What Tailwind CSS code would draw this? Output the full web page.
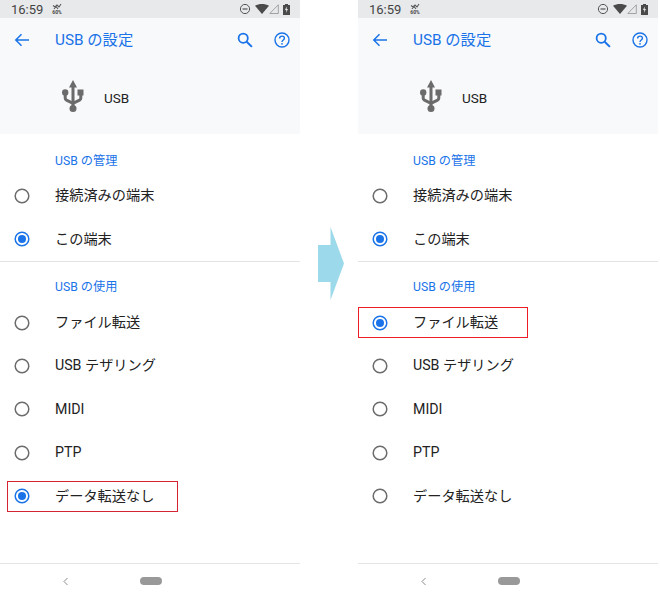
<!DOCTYPE html>
<html lang="ja">
<head>
    <meta charset="UTF-8">
    <title>USB の設定</title>
    <script src="https://cdn.jsdelivr.net/npm/@tailwindcss/browser@4"></script>
</head>
<body class="bg-white font-['Roboto','Noto_Sans_CJK_JP',sans-serif] overflow-hidden">
    <svg class="hidden">
        <symbol id="radio-off" viewBox="0 0 16 16"><circle cx="8" cy="8" r="6.8" fill="none" stroke="#6b6b6b" stroke-width="1.5"/></symbol>
        <symbol id="radio-on" viewBox="0 0 16 16"><circle cx="8" cy="8" r="6.8" fill="none" stroke="#1a73e8" stroke-width="1.5"/><circle cx="8" cy="8" r="4" fill="#1a73e8"/></symbol>
        <symbol id="back" viewBox="0 0 16 16"><path d="M15 8H2M7.5 2.200 1.800 8l5.700 5.800" fill="none" stroke="#1a73e8" stroke-width="1.500"/></symbol>
        <symbol id="search" viewBox="0 0 16 16"><circle cx="6.200" cy="6.200" r="4.600" fill="none" stroke="#1a73e8" stroke-width="1.800"/><path d="m9.700 9.700 5.200 5.200" stroke="#1a73e8" stroke-width="2"/></symbol>
        <symbol id="help" viewBox="0 0 16 16"><circle cx="8" cy="8" r="7" fill="none" stroke="#1a73e8" stroke-width="1.400"/><path d="M5.600 6.400C5.600 5 6.600 4.100 8 4.100s2.400.900 2.400 2.100c0 1.700-2.400 1.800-2.400 3.800" fill="none" stroke="#1a73e8" stroke-width="1.400"/><circle cx="8" cy="11.800" r=".9" fill="#1a73e8"/></symbol>
        <symbol id="usb" viewBox="0 0 22 33"><path d="M11 0l4 7.500h-2.500V27h-3V7.500H7z" fill="#6b6b6b"/><circle cx="11" cy="28.500" r="3.500" fill="#6b6b6b"/><circle cx="3.200" cy="12.500" r="3.200" fill="#6b6b6b"/><rect x="15.500" y="9.500" width="6" height="6" fill="#6b6b6b"/><path d="M3.200 14v4.200c0 1 .6 1.500 1.300 1.900l6.500 3.200 6.500-3.200c.7-.4 1.300-.9 1.300-1.900V14" fill="none" stroke="#6b6b6b" stroke-width="3"/></symbol>
        <symbol id="dnd" viewBox="0 0 12 12"><circle cx="6" cy="6" r="4.600" fill="none" stroke="#555" stroke-width="1"/><path d="M3.500 6h5" stroke="#555" stroke-width="1.200"/></symbol>
        <symbol id="wifi" viewBox="0 0 14 10"><path d="M0 1.800C4-.6 10-.6 14 1.800L7 10z" fill="#4a4a4a"/></symbol>
        <symbol id="signal" viewBox="0 0 10 10"><path d="M9.300.8v8.700H.8z" fill="none" stroke="#9a9a9a" stroke-width=".9"/></symbol>
        <symbol id="battery" viewBox="0 0 7 11"><path d="M2 0h3v1h2v10H0V1h2z" fill="#4a4a4a"/><path d="M3.600 2.500 2 6h1.300L3 8.700 5 5H3.700z" fill="#e8e9eb"/></symbol>
        <symbol id="saver" viewBox="0 0 10 7"><path d="M1 2.500 3 4l2-2 2 2 2-3M2 6l2-2.500L6 6" fill="none" stroke="#5a5a5a" stroke-width="1.100"/></symbol>
    </svg>

    <div class="flex items-start">
        <!-- before -->
        <div class="w-[300px] h-[600px] shrink-0 flex flex-col">
            <div class="h-[18px] bg-[#e8e9eb] flex items-center pl-[11px] pr-[10px] text-[#444]">
                <span class="text-[13px] leading-none w-[41px]">16:59</span>
                <span class="w-[10px] h-[13px] flex flex-col items-center">
                    <svg class="w-[10px] h-[7px]"><use href="#saver"/></svg>
                    <span class="text-[5px] leading-[5px] font-bold">60%</span>
                </span>
                <span class="ml-auto flex items-center">
                    <svg class="w-[12px] h-[12px]"><use href="#dnd"/></svg>
                    <svg class="w-[14px] h-[10px] ml-[4px]"><use href="#wifi"/></svg>
                    <svg class="w-[10px] h-[10px]"><use href="#signal"/></svg>
                    <svg class="w-[7px] h-[11px] ml-[4px]"><use href="#battery"/></svg>
                </span>
            </div>
            <div class="h-[116px] bg-[#f8f9fb] flex flex-col">
                <div class="h-[44px] flex items-center pl-[14px] pr-[10px]">
                    <svg class="w-[16px] h-[16px] mr-[25px]"><use href="#back"/></svg>
                    <span class="text-[15.3px] leading-none text-[#1a73e8] pt-[2px]">USB の設定</span>
                    <svg class="w-[16px] h-[16px] ml-auto mr-[21px]"><use href="#search"/></svg>
                    <svg class="w-[16px] h-[16px]"><use href="#help"/></svg>
                </div>
                <div class="flex items-center pl-[62px] mt-[18px]">
                    <svg class="w-[22px] h-[33px] mr-[20px]"><use href="#usb"/></svg>
                    <span class="text-[13.5px] text-[#222] pt-[4px]">USB</span>
                </div>
            </div>
            <div class="h-[128px] border-b border-[#e4e4e4]">
                <div class="h-[40px] pl-[55px] flex items-end text-[12.2px] leading-[14px] text-[#1a73e8] pb-[6px]">USB の管理</div>
                <div class="h-[43.5px] flex items-center pl-[13.5px] text-[14.2px] text-[#222]">
                    <svg class="w-[16px] h-[16px] mr-[25.5px]"><use href="#radio-off"/></svg>接続済みの端末
                </div>
                <div class="h-[43.5px] flex items-center pl-[13.5px] text-[14.2px] text-[#222]">
                    <svg class="w-[16px] h-[16px] mr-[25.5px]"><use href="#radio-on"/></svg>この端末
                </div>
            </div>
            <div class="h-[39px] pl-[55px] flex items-end text-[12.2px] leading-[14px] text-[#1a73e8] pb-[7px]">USB の使用</div>
            <div class="h-[43.4px] flex items-center pl-[13.5px] text-[14.2px] text-[#222]">
                <svg class="w-[16px] h-[16px] mr-[25.5px]"><use href="#radio-off"/></svg>ファイル転送
            </div>
            <div class="h-[43.4px] flex items-center pl-[13.5px] text-[14.2px] text-[#222]">
                <svg class="w-[16px] h-[16px] mr-[25.5px]"><use href="#radio-off"/></svg>USB テザリング
            </div>
            <div class="h-[43.4px] flex items-center pl-[13.5px] text-[14.2px] text-[#222]">
                <svg class="w-[16px] h-[16px] mr-[25.5px]"><use href="#radio-off"/></svg>MIDI
            </div>
            <div class="h-[43.4px] flex items-center pl-[13.5px] text-[14.2px] text-[#222]">
                <svg class="w-[16px] h-[16px] mr-[25.5px]"><use href="#radio-off"/></svg>PTP
            </div>
            <div class="relative h-[43.4px] flex items-center pl-[13.5px] text-[14.2px] text-[#222]">
                <svg class="w-[16px] h-[16px] mr-[25.5px]"><use href="#radio-on"/></svg>データ転送なし
                <div class="absolute left-[7px] top-[6px] w-[171px] h-[31px] border border-[#d5232f]"></div>
            </div>
            <div class="mt-[45px] h-[34px] pt-[2px] border-t border-[#e4e4e4] relative flex items-center pl-[62px]">
                <svg class="w-[7px] h-[9px] mr-[71px]" viewBox="0 0 7 9"><path d="M5.500 1 2 4.500 5.500 8" fill="none" stroke="#8a8a8a" stroke-width="1"/></svg>
                <div class="w-[22px] h-[8px] rounded-full bg-[#999]"></div>
            </div>
        </div>

        <!-- arrow -->
        <div class="w-[58px] shrink-0 pt-[227px] pl-[18px]">
            <svg class="w-[26px] h-[73px]" viewBox="0 0 26 73"><path d="M0 18h12.500V0L26 36.500 12.500 73V55H0z" fill="#9cd9ea"/></svg>
        </div>

        <!-- after -->
        <div class="w-[300px] h-[600px] shrink-0 flex flex-col">
            <div class="h-[18px] bg-[#e8e9eb] flex items-center pl-[11px] pr-[10px] text-[#444]">
                <span class="text-[13px] leading-none w-[41px]">16:59</span>
                <span class="w-[10px] h-[13px] flex flex-col items-center">
                    <svg class="w-[10px] h-[7px]"><use href="#saver"/></svg>
                    <span class="text-[5px] leading-[5px] font-bold">60%</span>
                </span>
                <span class="ml-auto flex items-center">
                    <svg class="w-[12px] h-[12px]"><use href="#dnd"/></svg>
                    <svg class="w-[14px] h-[10px] ml-[4px]"><use href="#wifi"/></svg>
                    <svg class="w-[10px] h-[10px]"><use href="#signal"/></svg>
                    <svg class="w-[7px] h-[11px] ml-[4px]"><use href="#battery"/></svg>
                </span>
            </div>
            <div class="h-[116px] bg-[#f8f9fb] flex flex-col">
                <div class="h-[44px] flex items-center pl-[14px] pr-[10px]">
                    <svg class="w-[16px] h-[16px] mr-[25px]"><use href="#back"/></svg>
                    <span class="text-[15.3px] leading-none text-[#1a73e8] pt-[2px]">USB の設定</span>
                    <svg class="w-[16px] h-[16px] ml-auto mr-[21px]"><use href="#search"/></svg>
                    <svg class="w-[16px] h-[16px]"><use href="#help"/></svg>
                </div>
                <div class="flex items-center pl-[62px] mt-[18px]">
                    <svg class="w-[22px] h-[33px] mr-[20px]"><use href="#usb"/></svg>
                    <span class="text-[13.5px] text-[#222] pt-[4px]">USB</span>
                </div>
            </div>
            <div class="h-[128px] border-b border-[#e4e4e4]">
                <div class="h-[40px] pl-[55px] flex items-end text-[12.2px] leading-[14px] text-[#1a73e8] pb-[6px]">USB の管理</div>
                <div class="h-[43.5px] flex items-center pl-[13.5px] text-[14.2px] text-[#222]">
                    <svg class="w-[16px] h-[16px] mr-[25.5px]"><use href="#radio-off"/></svg>接続済みの端末
                </div>
                <div class="h-[43.5px] flex items-center pl-[13.5px] text-[14.2px] text-[#222]">
                    <svg class="w-[16px] h-[16px] mr-[25.5px]"><use href="#radio-on"/></svg>この端末
                </div>
            </div>
            <div class="h-[39px] pl-[55px] flex items-end text-[12.2px] leading-[14px] text-[#1a73e8] pb-[7px]">USB の使用</div>
            <div class="relative h-[43.4px] flex items-center pl-[13.5px] text-[14.2px] text-[#222]">
                <svg class="w-[16px] h-[16px] mr-[25.5px]"><use href="#radio-on"/></svg>ファイル転送
                <div class="absolute left-0 top-[6px] w-[170px] h-[31px] border border-[#ee1c25]"></div>
            </div>
            <div class="h-[43.4px] flex items-center pl-[13.5px] text-[14.2px] text-[#222]">
                <svg class="w-[16px] h-[16px] mr-[25.5px]"><use href="#radio-off"/></svg>USB テザリング
            </div>
            <div class="h-[43.4px] flex items-center pl-[13.5px] text-[14.2px] text-[#222]">
                <svg class="w-[16px] h-[16px] mr-[25.5px]"><use href="#radio-off"/></svg>MIDI
            </div>
            <div class="h-[43.4px] flex items-center pl-[13.5px] text-[14.2px] text-[#222]">
                <svg class="w-[16px] h-[16px] mr-[25.5px]"><use href="#radio-off"/></svg>PTP
            </div>
            <div class="h-[43.4px] flex items-center pl-[13.5px] text-[14.2px] text-[#222]">
                <svg class="w-[16px] h-[16px] mr-[25.5px]"><use href="#radio-off"/></svg>データ転送なし
            </div>
            <div class="mt-[45px] h-[34px] pt-[2px] border-t border-[#e4e4e4] relative flex items-center pl-[62px]">
                <svg class="w-[7px] h-[9px] mr-[71px]" viewBox="0 0 7 9"><path d="M5.500 1 2 4.500 5.500 8" fill="none" stroke="#8a8a8a" stroke-width="1"/></svg>
                <div class="w-[22px] h-[8px] rounded-full bg-[#999]"></div>
            </div>
        </div>
    </div>
</body>
</html>
